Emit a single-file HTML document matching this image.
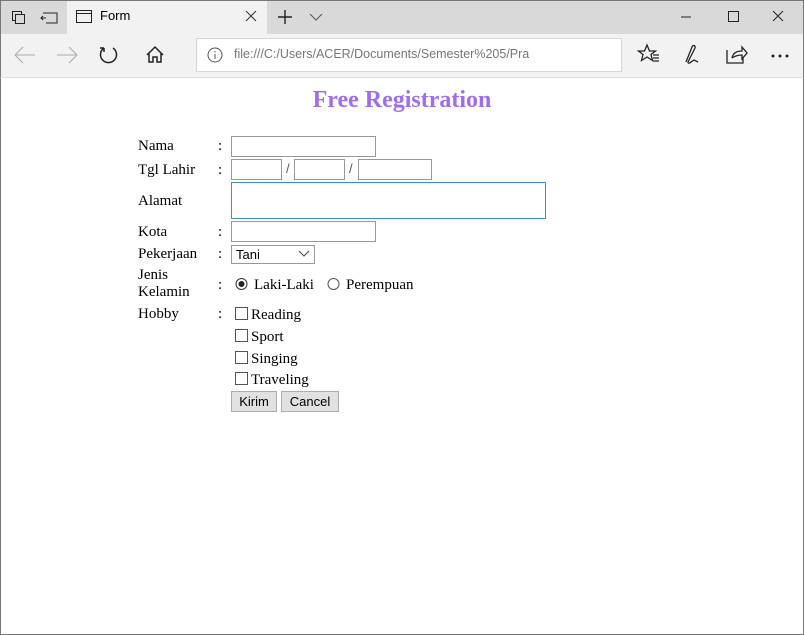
<!DOCTYPE html>
<html><head><style>
*{margin:0;padding:0;box-sizing:border-box}
body{width:804px;height:635px;position:relative;overflow:hidden;background:#fff;font-family:"Liberation Serif",serif;font-size:15px;color:#000}
.a{position:absolute}
.tabbar{left:0;top:0;width:804px;height:34px;background:#d9d9d9;border:1px solid #777;border-bottom:none}
.tab{left:67px;top:1px;width:200px;height:33px;background:#f2f2f2}
.tool{left:0;top:34px;width:804px;height:44px;background:#f2f2f2;border-left:1px solid #777;border-right:1px solid #777;border-bottom:1px solid #ddd}
.url{left:196px;top:38px;width:426px;height:34px;background:#fff;border:1px solid #d6d6d6}
.ui{font-family:"Liberation Sans",sans-serif}
.frame{left:0;top:78px;width:804px;height:557px;border:1px solid #777;border-top:none}
.in{position:absolute;border:1px solid #999;background:#fff;height:21px}
.lbl{position:absolute;left:138px}
.col{position:absolute;left:218px}
.cb{position:absolute;width:13px;height:13px;border:1px solid #555;background:#fff;left:235px}
.btn{position:absolute;top:391px;height:21px;background:#e1e1e1;border:1px solid #adadad;font-family:"Liberation Sans",sans-serif;font-size:13px;text-align:center;line-height:19px}
</style></head><body>
<div class="a tabbar"></div>
<div class="a tab"></div>
<svg class="a" style="left:0;top:0" width="804" height="80" fill="none" stroke="#222" stroke-width="1">
<rect x="12.5" y="11.5" width="9" height="9"/><rect x="15.5" y="14.5" width="9" height="9" fill="#d9d9d9"/>
<path d="M43 13h14v10H46M46 18h-5M43 16l-2 2 2 2"/>
<rect x="76.5" y="10.5" width="15" height="12"/><path d="M76.5 13.5h15"/>
<path d="M246 11l10 10M256 11l-10 10" stroke="#333"/>
<path d="M278 17h14M285 10v14" stroke-width="1.4"/>
<path d="M310 14l6 6 6-6" stroke="#555"/>
<path d="M681 17h10"/><rect x="728.5" y="11.5" width="10" height="10"/><path d="M773 11l10 10M783 11l-10 10"/>
<path d="M15 55h20M15 55l8-8M15 55l8 8" stroke="#aaa"/>
<path d="M57 55h20M77 55l-8-8M77 55l-8 8" stroke="#aaa"/>
<path d="M104 48a8 8 0 1 0 9 0M104 48v4M104 48h-4" stroke-width="1.5"/>
<path d="M147 55l8-8 8 8M149 53v9h4v-5h4v5h4v-9" stroke-width="1.5"/>
<path d="M546 48h9v15h-9zM555 48h9v15h-9z" stroke="#aaa"/>
<path d="M587 45l3 7h7l-5.5 4.5 2 7-6.5-4-6.5 4 2-7-5.5-4.5h7z" stroke-width="1.4"/>
<path d="M647 45l2.5 6h6l-4.5 3.5 1.5 6-5.5-3.5-5.5 3.5 1.5-6-4.5-3.5h6zM653 55h6M653 58h6M653 61h6" stroke-width="1.3"/>
<path d="M686 62l6-15c1-3 4-1 3 1l-7 14c0 2 2 1 3 0l3 -2 4 2" stroke-width="1.3"/>
<path d="M727 50v13h16v-5M732 58c1-5 5-7 10-7v-4l5 6-5 6v-4c-4 0-7 1-10 3" stroke-width="1.3"/>
<circle cx="773" cy="56" r="1" fill="#222"/><circle cx="780" cy="56" r="1" fill="#222"/><circle cx="787" cy="56" r="1" fill="#222"/>
</svg>
<div class="a ui" style="left:100px;top:8px;font-size:13px">Form</div>
<div class="a tool" style="z-index:-1"></div>
<div class="a url"></div>
<svg class="a" style="left:207px;top:47px" width="16" height="16"><circle cx="8" cy="8" r="7" fill="none" stroke="#555"/><path d="M8 7v5M8 4v1.5" stroke="#555"/></svg>
<div class="a ui" style="left:234px;top:47px;font-size:12.5px;color:#777">file:///C:/Users/ACER/Documents/Semester%205/Pra</div>
<div class="a frame"></div>

<div class="a" style="left:0;top:87px;width:804px;text-align:center;font-weight:bold;font-size:24px;color:#9f6ef0">Free Registration</div>

<div class="lbl" style="top:138px">Nama</div><div class="col" style="top:138px">:</div>
<div class="in" style="left:231px;top:136px;width:145px"></div>
<div class="lbl" style="top:162px">Tgl Lahir</div><div class="col" style="top:162px">:</div>
<div class="in" style="left:231px;top:159px;width:51px"></div>
<div class="a ui" style="left:286px;top:161px;font-size:13px;color:#555">/</div>
<div class="in" style="left:294px;top:159px;width:51px"></div>
<div class="a ui" style="left:349px;top:161px;font-size:13px;color:#555">/</div>
<div class="in" style="left:358px;top:159px;width:74px"></div>
<div class="lbl" style="top:193px">Alamat</div>
<div class="in" style="left:231px;top:182px;width:315px;height:37px;border-color:#3c8fc7"></div>
<div class="lbl" style="top:224px">Kota</div><div class="col" style="top:224px">:</div>
<div class="in" style="left:231px;top:221px;width:145px"></div>
<div class="lbl" style="top:246px">Pekerjaan</div><div class="col" style="top:246px">:</div>
<div class="in ui" style="left:231px;top:245px;width:84px;height:19px;font-size:13px;padding-left:4px;line-height:17px">Tani</div>
<svg class="a" style="left:298px;top:250px" width="12" height="8"><path d="M1 1l5 5 5-5" fill="none" stroke="#444"/></svg>
<div class="lbl" style="top:267px;line-height:17px">Jenis<br>Kelamin</div><div class="col" style="top:277px">:</div>
<svg class="a" style="left:235px;top:277px" width="110" height="14"><circle cx="6.5" cy="7" r="5.5" fill="#fff" stroke="#333"/><circle cx="6.5" cy="7" r="3" fill="#222"/><circle cx="98.5" cy="7" r="5.5" fill="#fff" stroke="#555"/></svg>
<div class="a" style="left:254px;top:277px">Laki-Laki</div>
<div class="a" style="left:346px;top:277px">Perempuan</div>
<div class="lbl" style="top:306px">Hobby</div><div class="col" style="top:306px">:</div>
<div class="cb" style="top:307px"></div><div class="a" style="left:251px;top:307px">Reading</div>
<div class="cb" style="top:329px"></div><div class="a" style="left:251px;top:329px">Sport</div>
<div class="cb" style="top:351px"></div><div class="a" style="left:251px;top:351px">Singing</div>
<div class="cb" style="top:372px"></div><div class="a" style="left:251px;top:372px">Traveling</div>
<div class="btn" style="left:231px;width:46px">Kirim</div>
<div class="btn" style="left:281px;width:58px">Cancel</div>
</body></html>
